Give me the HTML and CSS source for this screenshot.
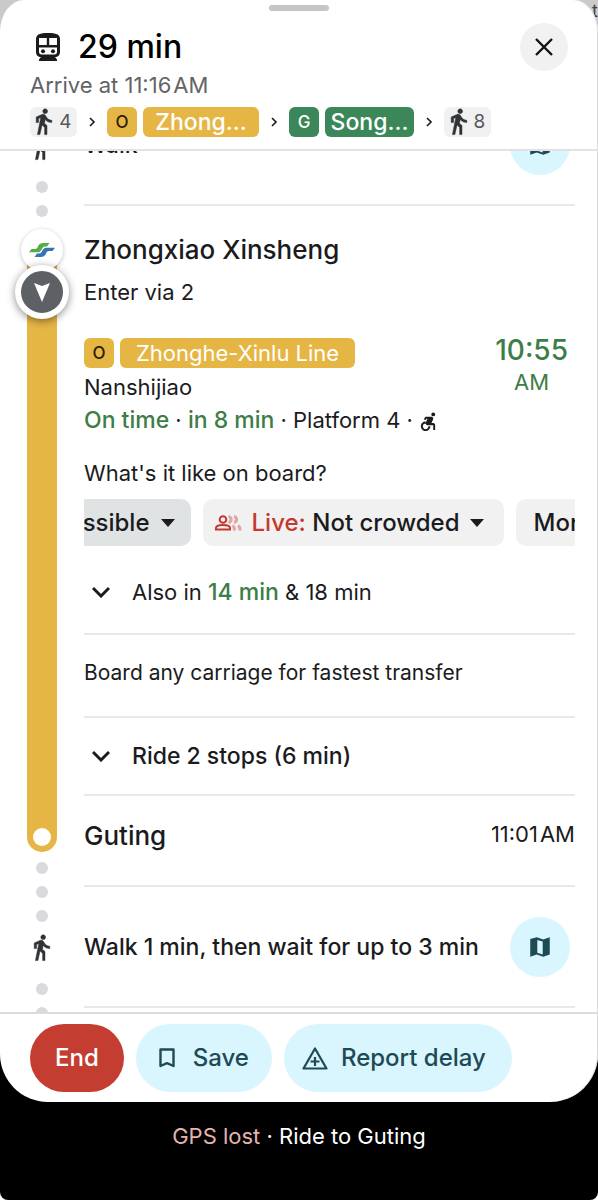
FILE: index.html
```html
<!DOCTYPE html>
<html lang="en">
<head>
    <meta charset="UTF-8">
    <meta name="viewport" content="width=device-width, initial-scale=1.0">
    <title>Trip directions</title>
    <link rel="stylesheet" href="styles.css">
</head>
<body>
    <!-- Shared icons -->
    <svg class="sprite" aria-hidden="true">
        <symbol id="icon-walk" viewBox="5 1 15 23">
            <path stroke="currentColor" stroke-width=".4" d="M13.500 5.500c1.100 0 2-.9 2-2s-.9-2-2-2-2 .9-2 2 .9 2 2 2zM9.800 8.900L7 23h2.100l1.800-8 2.100 2v6h2v-7.500l-2.100-2 .6-3C14.800 12 16.800 13 19 13v-2c-1.900 0-3.500-1-4.300-2.400l-1-1.600c-.4-.6-1-1-1.700-1-.3 0-.5.1-.8.1L6 8.300V13h2V9.600l1.800-.7"/>
        </symbol>
        <symbol id="icon-map" viewBox="0 0 24 24">
            <path fill-rule="evenodd" d="M3 4.500 9 3l6 2 6-2v16l-6 2-6-2-6 2zM9.500 5.500v11.800l5 1.700V7z"/>
        </symbol>
        <symbol id="icon-next" viewBox="0 0 8 12">
            <path d="M2 2l4 4-4 4" fill="none" stroke="currentColor" stroke-width="1.600"/>
        </symbol>
        <symbol id="icon-expand" viewBox="0 0 18 12">
            <path d="M1 2l8 8 8-8" fill="none" stroke="currentColor" stroke-width="3"/>
        </symbol>
        <symbol id="icon-arrow" viewBox="0 0 14 8">
            <path d="M0 0h14L7 8z"/>
        </symbol>
    </svg>

    <div class="app">
        <div class="map"><span class="map-label">t</span></div>

        <main class="sheet">
            <header class="header">
                <div class="handle"></div>
                <div class="title-row">
                    <svg class="train" viewBox="0 0 24 28" aria-hidden="true">
                        <path d="M12 0C4 0 0 1.500 0 6v13c0 3 2 5 5 5l-2 2.500V28h18v-1.500L19 24c3 0 5-2 5-5V6c0-4.500-4-6-12-6z"/>
                        <path d="M3 5h7.800v7H3zM13.200 5H21v7h-7.800zM3 14.500h18v4.500c0 1.500-1 2.500-2.500 2.500h-13C4 21.500 3 20.500 3 19z" fill="#fff"/>
                        <circle cx="7" cy="18.300" r="2"/>
                        <circle cx="17" cy="18.300" r="2"/>
                    </svg>
                    <h1>29 min</h1>
                    <button class="close" type="button" aria-label="Close">
                        <svg viewBox="0 0 18 18"><path d="M1 1l16 16M17 1L1 17" fill="none" stroke="currentColor" stroke-width="2.400"/></svg>
                    </button>
                </div>
                <p class="arrive">Arrive at 11:16&#8202;AM</p>
                <div class="route">
                    <span class="pill walk-pill"><svg class="walk"><use href="#icon-walk"/></svg>4</span>
                    <svg class="next"><use href="#icon-next"/></svg>
                    <span class="pill code orange">O</span>
                    <span class="pill name orange wide">Zhong...</span>
                    <svg class="next"><use href="#icon-next"/></svg>
                    <span class="pill code green">G</span>
                    <span class="pill name green">Song...</span>
                    <svg class="next"><use href="#icon-next"/></svg>
                    <span class="pill walk-pill"><svg class="walk"><use href="#icon-walk"/></svg>8</span>
                </div>
            </header>

            <div class="steps">
                <ol>
                    <!-- Walk to the station -->
                    <li class="step first-walk">
                        <div class="rail">
                            <svg class="walk"><use href="#icon-walk"/></svg>
                            <i class="dot"></i>
                            <i class="dot"></i>
                        </div>
                        <div class="body">
                            <div class="walk-row">
                                <span>Walk</span>
                                <button class="map-button" type="button" aria-label="Show on map"><svg><use href="#icon-map"/></svg></button>
                            </div>
                        </div>
                    </li>

                    <!-- Ride -->
                    <li class="step ride">
                        <div class="rail">
                            <div class="line"><i class="stop"></i></div>
                            <span class="metro-logo">
                                <svg viewBox="0 0 26 14">
                                    <path d="M0 9.300L2.500 6H6c2 0 2.200-1 3-2.800C10 1 12 0 14 0h6.500L18 3.400h-2c-2 0-2.200 1.200-3.500 3.300C11 9 10 9.300 8 9.300z" fill="#56ad45"/>
                                    <path d="M26 4.700L23.500 8H20c-2 0-2.200 1-3 2.800-1 2.200-3 3.200-5 3.200H5.500L8 10.600h2c2 0 2.200-1.200 3.500-3.300C15 5 16 4.700 18 4.700z" fill="#3474b4"/>
                                </svg>
                            </span>
                            <span class="position">
                                <svg viewBox="0 0 16 19"><path d="M0 0l8 3 8-3-8 19z" fill="#fff"/></svg>
                            </span>
                        </div>
                        <div class="body">
                            <h2>Zhongxiao Xinsheng</h2>
                            <p class="enter">Enter via 2</p>
                            <div class="departure">
                                <div>
                                    <div class="badges">
                                        <span class="pill code orange">O</span>
                                        <span class="pill line-name orange">Zhonghe-Xinlu Line</span>
                                    </div>
                                    <p>Nanshijiao</p>
                                    <p class="status"><b>On time</b> · <b>in 8 min</b> · Platform 4 ·
                                        <svg viewBox="4 2 17 21" aria-label="Accessible"><circle cx="18" cy="4.540" r="2"/><path d="M15 17h-2c0 1.650-1.350 3-3 3s-3-1.350-3-3 1.350-3 3-3v-2c-2.760 0-5 2.240-5 5s2.240 5 5 5 5-2.240 5-5zm3-3.500h-1.860l1.670-3.670C18.420 8.500 17.440 7 15.960 7h-5.200c-.81 0-1.540.47-1.870 1.200L8.220 10l1.920.53L10.790 9H12l-1.830 4.100c-.6 1.330.39 2.900 1.850 2.900H18v5h2v-5.500c0-1.100-.9-2-2-2z"/></svg>
                                    </p>
                                </div>
                                <div class="time"><b>10:55</b>AM</div>
                            </div>
                            <p class="question">What's it like on board?</p>
                            <div class="chips">
                                <button class="chip selected" type="button">Accessible <svg class="arrow"><use href="#icon-arrow"/></svg></button>
                                <button class="chip crowd" type="button">
                                    <svg class="people" viewBox="0 0 27 16">
                                        <circle cx="8" cy="4.500" r="3.300"/>
                                        <path d="M1 14.500v-1.500c0-2.200 4-3 7-3s7 .8 7 3v1.500z"/>
                                        <path class="faded" d="M13.500 1.500c3.500 1 3.500 5 0 6M19 1.500c3.500 1 3.500 5 0 6M17.500 10.500c1.800.8 2 2 2 5M23 10.500c1.800.8 2 2 2 5"/>
                                    </svg>
                                    <span><span class="live">Live:</span> Not crowded</span>
                                    <svg class="arrow"><use href="#icon-arrow"/></svg>
                                </button>
                                <button class="chip" type="button">More</button>
                            </div>
                            <button class="row also" type="button">
                                <svg class="expand"><use href="#icon-expand"/></svg>
                                <span>Also in <b>14 min</b> &amp; 18 min</span>
                            </button>
                            <p class="row board">Board any carriage for fastest transfer</p>
                            <button class="row stops" type="button">
                                <svg class="expand"><use href="#icon-expand"/></svg>
                                <span>Ride 2 stops (6 min)</span>
                            </button>
                            <div class="arrival">
                                <h2>Guting</h2>
                                <span>11:01&#8202;AM</span>
                            </div>
                        </div>
                    </li>

                    <!-- Transfer -->
                    <li class="step transfer">
                        <div class="rail">
                            <i class="dot"></i>
                            <i class="dot"></i>
                            <i class="dot"></i>
                            <svg class="walk"><use href="#icon-walk"/></svg>
                            <i class="dot"></i>
                            <i class="dot"></i>
                        </div>
                        <div class="body">
                            <div class="walk-row">
                                <span>Walk 1 min, then wait for up to 3 min</span>
                                <button class="map-button" type="button" aria-label="Show on map"><svg><use href="#icon-map"/></svg></button>
                            </div>
                        </div>
                    </li>
                </ol>
            </div>

            <footer class="actions">
                <button class="action end" type="button">End</button>
                <button class="action" type="button">
                    <svg class="bookmark" viewBox="0 0 16 20"><path d="M1.500 1.500h13v16.500L8 15.200 1.500 18z" fill="none" stroke="currentColor" stroke-width="2.400" stroke-linejoin="round"/></svg>
                    Save
                </button>
                <button class="action report" type="button">
                    <svg class="warning" viewBox="0 0 26 23"><path d="M13 1.500L1.500 21.500h23zM13 10v9M8.500 14.500h9" fill="none" stroke="currentColor" stroke-width="2.200" stroke-linejoin="round"/></svg>
                    Report delay
                </button>
            </footer>
        </main>

        <p class="gps"><span>GPS lost</span> · Ride to Guting</p>
    </div>
</body>
</html>
```
FILE: styles.css
```css
/* General page styles */
* {
    box-sizing: border-box;
}

body {
    margin: 0;
    font-family: Inter, Roboto, sans-serif;
    font-size: 22px;
    line-height: 28px;
    color: #1b1b1d;
    background-color: #fff;
}

h1, h2, p, ol {
    margin: 0;
    padding: 0;
}

h1, h2 {
    font-weight: 500;
}

ol {
    list-style: none;
}

button {
    font: inherit;
    color: inherit;
    border: none;
    background: none;
    padding: 0;
    cursor: pointer;
}

svg {
    fill: currentColor;
    flex: none;
}

.sprite {
    display: none;
}

.app {
    position: relative;
    display: flex;
    flex-direction: column;
    height: 100vh;
    background-color: #000;
    border-radius: 0 0 8px 8px;
    overflow: hidden;
}

/* Map behind the sheet */
.map {
    position: absolute;
    top: 0;
    left: 0;
    right: 0;
    height: 60px;
    background-color: #cbc9cb;
}

.map-label {
    position: absolute;
    top: -3px;
    right: 0;
    font-size: 18px;
    color: #444;
}

.sheet {
    position: relative;
    flex: 1;
    min-height: 0;
    display: flex;
    flex-direction: column;
    background-color: #fff;
    box-shadow: inset -1px 0 #dcdcde;
    border-radius: 24px 24px 48px 48px / 32px 32px 48px 48px;
    overflow: hidden;
}

/* Header */
.header {
    padding: 5px 30px 12px;
    border-bottom: 2px solid #e2e2e4;
}

.handle {
    width: 60px;
    height: 6px;
    margin: 0 auto 12px;
    border-radius: 3px;
    background-color: #c5c5c5;
}

.title-row {
    display: flex;
    align-items: center;
    padding-left: 6px;
}

.train {
    width: 24px;
    height: 28px;
}

h1 {
    flex: 1;
    margin-left: 18px;
    font-size: 32px;
    color: #000;
}

.close {
    display: flex;
    align-items: center;
    justify-content: center;
    width: 48px;
    height: 48px;
    border-radius: 50%;
    background-color: #f1f1f1;
    color: #111;
}

.close svg {
    width: 18px;
    height: 18px;
}

.arrive {
    color: #636366;
}

.route {
    display: flex;
    align-items: center;
    margin-top: 8px;
}

.pill {
    display: flex;
    align-items: center;
    justify-content: center;
    height: 30px;
    border-radius: 6px;
}

.walk-pill {
    gap: 6px;
    width: 47px;
    font-size: 19px;
    background-color: #f1f1f1;
    color: #58585a;
}

.walk {
    width: 18px;
    height: 28px;
    color: #303336;
}

.code {
    width: 30px;
    margin-right: 6px;
    font-size: 17px;
    font-weight: 500;
}

.name {
    width: 89px;
    font-size: 23px;
    font-weight: 500;
}

.wide {
    width: 116px;
}

.orange {
    background-color: #e6b645;
    color: #2b1d05;
}

.green {
    background-color: #3b8759;
    color: #fff;
}

.name.orange, .line-name {
    color: #fff;
}

.next {
    width: 8px;
    height: 12px;
    margin: 0 11px;
}

/* Timeline */
.steps {
    flex: 1;
    min-height: 0;
    overflow: hidden;
}

/* the list is scrolled so that the first walk is partly hidden */
.steps ol {
    margin-top: -66px;
}

.step {
    display: flex;
    padding-right: 23px;
}

.rail {
    position: relative;
    flex: none;
    width: 84px;
    display: flex;
    flex-direction: column;
    align-items: center;
    gap: 12px;
    padding-right: 1px;
}

.body {
    flex: 1;
    min-width: 0;
}

.dot {
    width: 12px;
    height: 12px;
    border-radius: 50%;
    background-color: #d9dadd;
}

.walk-row {
    display: flex;
    align-items: center;
    justify-content: space-between;
    height: 121px;
    padding-right: 5px;
    border-bottom: 2px solid #e8e8ea;
    font-size: 23px;
    font-weight: 500;
}

.map-button {
    display: flex;
    align-items: center;
    justify-content: center;
    width: 60px;
    height: 60px;
    border-radius: 50%;
    background-color: #d9f5fe;
    color: #1d4a54;
}

.map-button svg {
    width: 26px;
    height: 26px;
}

.first-walk {
    height: 145px;
}

.first-walk .rail {
    padding-top: 48px;
}

.rail .walk {
    margin-bottom: 8px;
}

/* Ride */
.line {
    flex: 1;
    display: flex;
    align-items: flex-end;
    justify-content: center;
    width: 30px;
    margin-top: 20px;
    padding-bottom: 6px;
    border-radius: 0 0 15px 15px;
    background-color: #e6b645;
}

.stop {
    width: 18px;
    height: 18px;
    border-radius: 50%;
    background-color: #fff;
}

.metro-logo, .position {
    position: absolute;
    display: flex;
    align-items: center;
    justify-content: center;
    border-radius: 50%;
}

.metro-logo {
    top: -1px;
    width: 42px;
    height: 42px;
    background-color: #fff;
    box-shadow: 0 1px 4px rgba(0, 0, 0, 0.25);
}

.metro-logo svg {
    width: 26px;
    height: 14px;
}

.position {
    top: 35px;
    width: 54px;
    height: 54px;
    border: 6px solid #fff;
    background-color: #5d6065;
    box-shadow: 0 2px 8px rgba(0, 0, 0, 0.45);
}

.position svg {
    width: 16px;
    height: 19px;
}

h2 {
    font-size: 26px;
    line-height: 40px;
}

.enter {
    margin-top: 8px;
}

.departure {
    display: flex;
    justify-content: space-between;
    margin-top: 32px;
}

.badges {
    display: flex;
    margin-bottom: 5px;
}

.line-name {
    padding: 0 16px;
}

.status {
    margin-top: 5px;
}

.status b, .time b, .also b {
    font-size: 23px;
    font-weight: 500;
    color: #3d7d48;
}

.status svg {
    width: 18px;
    height: 20px;
    vertical-align: -4px;
}

.time {
    display: flex;
    flex-direction: column;
    align-items: center;
    gap: 8px;
    padding-right: 7px;
    line-height: 24px;
    color: #3d7d48;
}

.time b {
    font-size: 28px;
}

.question {
    margin-top: 25px;
}

.chips {
    display: flex;
    gap: 12px;
    margin-top: 12px;
    overflow: hidden;
}

.chip {
    flex: none;
    display: flex;
    align-items: center;
    gap: 11px;
    height: 47px;
    padding: 0 16px 0 12px;
    border-radius: 10px;
    background-color: #f1f1f1;
    font-size: 24px;
    font-weight: 500;
}

.chip:last-child {
    padding: 0 18px;
}

.selected {
    margin-left: -72px;
    background-color: #dfe3e4;
}

.live {
    color: #c5382f;
}

.people {
    width: 27px;
    height: 16px;
    fill: none;
    stroke: #c5382f;
    stroke-width: 2;
}

.faded {
    stroke-width: 3;
    stroke-opacity: 0.4;
}

.crowd {
    gap: 10px;
    padding-right: 20px;
}

.arrow {
    width: 14px;
    height: 8px;
}

.row {
    display: flex;
    align-items: center;
    width: 100%;
    border-bottom: 2px solid #e8e8ea;
    text-align: left;
}

.expand {
    width: 18px;
    height: 12px;
    margin: 0 22px 0 8px;
}

.also {
    height: 89px;
    padding-top: 4px;
}

.board {
    height: 83px;
    padding-bottom: 6px;
    font-size: 21px;
}

.stops {
    height: 78px;
    font-size: 23px;
    font-weight: 500;
}

.arrival {
    display: flex;
    justify-content: space-between;
    height: 56px;
    padding-top: 20px;
}

.arrival span {
    line-height: 36px;
}

.transfer .rail {
    padding-top: 10px;
}

.transfer .body {
    margin-top: 33px;
    border-top: 2px solid #e8e8ea;
}

.transfer .rail .walk {
    margin-bottom: 9px;
}

/* Bottom buttons */
.actions {
    display: flex;
    gap: 12px;
    padding: 10px 30px;
    border-top: 2px solid #dcdcde;
}

.action {
    display: flex;
    align-items: center;
    gap: 18px;
    height: 68px;
    padding: 0 23px;
    border-radius: 34px;
    background-color: #d9f5fe;
    color: #1d4a54;
    font-size: 24px;
    font-weight: 500;
}

.end {
    padding: 0 25px;
    background-color: #c33e31;
    color: #fff;
}

.report {
    gap: 13px;
    padding: 0 26px 0 18px;
}

.bookmark {
    width: 16px;
    height: 20px;
}

.warning {
    width: 26px;
    height: 23px;
}

.gps {
    height: 98px;
    padding-top: 20px;
    text-align: center;
    color: #fff;
}

.gps span {
    color: #e5b3ae;
}
```
